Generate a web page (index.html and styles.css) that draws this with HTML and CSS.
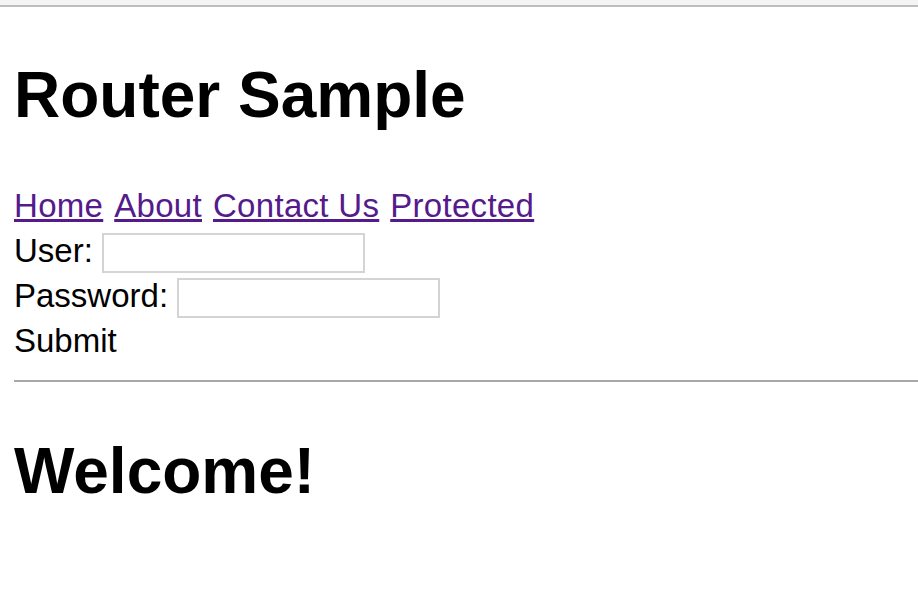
FILE: index.html
```html
<!DOCTYPE html>
<html>
<head>
<meta charset="utf-8">
<title>Router Sample</title>
<link rel="stylesheet" href="styles.css">
</head>
<body>
<div class="chrome"></div>
<main class="page">
  <h1 class="title">Router Sample</h1>
  <nav class="nav">
    <a class="link" href="#/">Home</a>
    <a class="link" href="#/about">About</a>
    <a class="link" href="#/contact">Contact Us</a>
    <a class="link" href="#/protected">Protected</a>
  </nav>
  <form class="login">
    <div class="row"><label class="label" for="user">User:</label><input class="field" id="user" type="text"></div>
    <div class="row"><label class="label" for="pass">Password:</label><input class="field" id="pass" type="password"></div>
    <div class="row"><button class="submit" type="button">Submit</button></div>
  </form>
  <hr class="rule">
  <h1 class="welcome">Welcome!</h1>
</main>
</body>
</html>
```
FILE: styles.css
```css
html, body {
  margin: 0;
  padding: 0;
  background: #ffffff;
}
body {
  font-family: "Liberation Sans", Arial, Helvetica, sans-serif;
  color: #000;
  overflow: hidden;
}
.chrome {
  height: 5px;
  background: #f4f4f4;
  border-bottom: 2px solid #bdbdbd;
}
.page {
  padding-left: 14px;
}
.title,
.welcome {
  font-size: 64px;
  font-weight: bold;
  line-height: 72px;
  margin: 0;
}
.title {
  margin-top: 52px;
}
.nav {
  display: flex;
  gap: 11px;
  margin-top: 52px;
  height: 45px;
  font-size: 33px;
  line-height: 45px;
  white-space: nowrap;
  letter-spacing: 0.3px;
}
.link {
  color: #551a8b;
  text-decoration: underline;
}
.login {
  margin: 0;
}
.row {
  display: flex;
  align-items: flex-start;
  height: 45px;
  font-size: 33px;
  line-height: 45px;
}
.label {
  margin-right: 9px;
}
.field {
  box-sizing: border-box;
  margin: 5px 0 0 0;
  width: 263px;
  height: 40px;
  border: 2px solid #d4d4d4;
  background: #fff;
  padding: 0 4px;
  font: inherit;
  font-size: 20px;
}
.submit {
  font: inherit;
  line-height: 45px;
  padding: 0;
  margin: 0;
  border: 0;
  background: none;
  color: #000;
}
.rule {
  margin: 17px 0 0 0;
  border: 0;
  border-top: 2px solid #a8a8a8;
  height: 0;
}
.welcome {
  margin-top: 53px;
}
```
